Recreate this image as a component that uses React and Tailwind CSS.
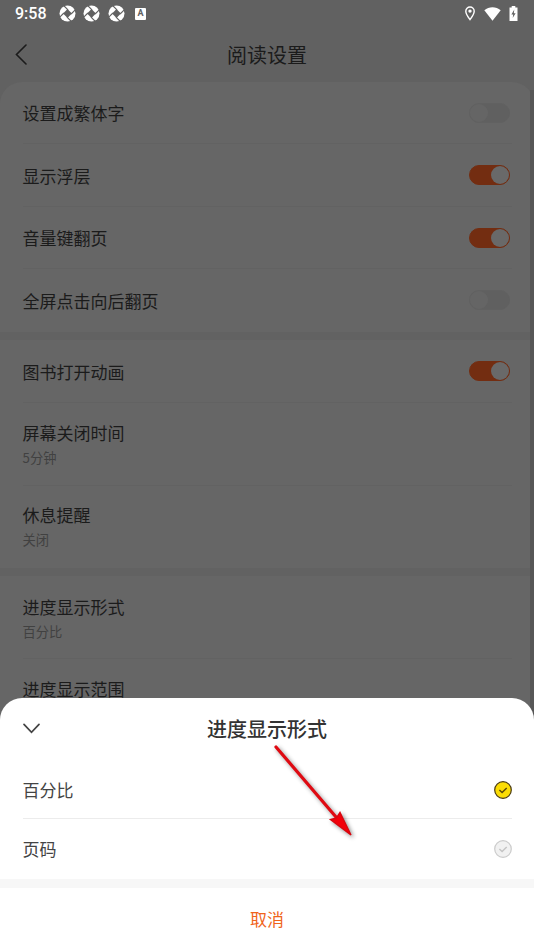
import React from 'react';

const groups = [
  [
    { title: '设置成繁体字', on: false, size: 'h-[61px] pb-px' },
    { title: '显示浮层', on: true, size: 'h-[63px]' },
    { title: '音量键翻页', on: true, size: 'h-[62px]' },
    { title: '全屏点击向后翻页', on: false, size: 'h-[63px] pb-px' },
  ],
  [
    { title: '图书打开动画', on: true, size: 'h-[63px]' },
    { title: '屏幕关闭时间', value: '5分钟', size: 'h-[83px]' },
    { title: '休息提醒', value: '关闭', size: 'h-[82px] pb-[2px]' },
  ],
  [
    { title: '进度显示形式', value: '百分比', size: 'h-[83px] pt-px' },
    { title: '进度显示范围', value: '全书', size: 'h-[82px] pb-px' },
  ],
];

function ApertureIcon() {
  return (
    <svg width="17" height="17" viewBox="0 0 17 17">
      <circle cx="8.5" cy="8.5" r="8" fill="#fff" />
      <path d="M8.5 4.1 12.9 8.5 8.5 12.9 4.1 8.5Z" fill="#616161" />
      <path d="M9 4.9 4.6.5M12.1 9 16.5 4.6M8 12.1 12.4 16.5M4.9 8 .5 12.4" stroke="#616161" strokeWidth="1.1" />
    </svg>
  );
}

function StatusBar() {
  return (
    <div className="flex h-7 items-center justify-between pl-[15px] pr-[16px] pb-px text-white">
      <div className="flex items-center">
        <span className="w-[43.5px] pt-px font-['Roboto',sans-serif] text-[16px] leading-6 font-medium">9:58</span>
        <div className="flex gap-[7.5px]">
          <ApertureIcon />
          <ApertureIcon />
          <ApertureIcon />
        </div>
        <span className="ml-[10.5px] flex h-3 w-[11px] items-center justify-center rounded-[1px] bg-white font-['Roboto',sans-serif] text-[9px] leading-none font-bold text-[#616161]">
          A
        </span>
      </div>
      <div className="flex items-center">
        <svg width="10" height="15" viewBox="0 0 10 15" fill="none" stroke="#fff" strokeWidth="1.4">
          <path d="M5 13.6C3.8 11.8.8 8.2.8 5.2a4.2 4.2 0 0 1 8.4 0c0 3-3 6.6-4.2 8.4Z" />
          <circle cx="5" cy="5.1" r="1.7" fill="#fff" stroke="none" />
        </svg>
        <svg className="ml-[9.5px]" width="17" height="14" viewBox="0 0 17 14">
          <path d="M.3 3.3C5-.7 12-.7 16.7 3.3L8.5 13.8Z" fill="#fff" />
        </svg>
        <svg className="ml-[8px]" width="9" height="15" viewBox="0 0 9 15">
          <path d="M2.7 0h3.6v1.4H8.5V15H.5V1.4h2.2Z" fill="#fff" />
          <path d="M5.3 3.6 2.4 8.5h1.8L3.7 12 6.6 7.2H4.8Z" fill="#616161" />
        </svg>
      </div>
    </div>
  );
}

function Toggle({ on }) {
  return (
    <span
      className={`mr-[2px] flex h-5 w-[41px] items-center rounded-full border ${
        on ? 'justify-end border-[#732d11] bg-[#732d11]' : 'justify-start border-[#616161] bg-[#606060]'
      }`}
    >
      <span className={`h-[18px] w-[18px] rounded-full ${on ? 'bg-[#696969]' : 'bg-[#656565]'}`} />
    </span>
  );
}

function SettingRow({ item, last }) {
  return (
    <div className={`ml-[22.5px] mr-[22px] flex items-center justify-between ${item.size} ${last ? '' : 'border-b border-[#626262]'}`}>
      <div>
        <div className="text-[17px] leading-[25px] text-[#1b1b1b]">{item.title}</div>
        {item.value && <div className="mt-[3px] text-[13.3px] leading-5 text-[#414141]">{item.value}</div>}
      </div>
      {item.on !== undefined && <Toggle on={item.on} />}
    </div>
  );
}

function CheckMark({ active }) {
  return (
    <svg width="18" height="18" viewBox="0 0 18 18" fill="none">
      <circle cx="9" cy="9" r="8.3" fill={active ? '#fbdc04' : '#f1f1f1'} stroke={active ? '#4a3a10' : '#cbcbcb'} strokeWidth="1.2" />
      <path d="M5.4 9 8.1 11.6 12.7 7" stroke={active ? '#5a4608' : '#c4c4c4'} strokeWidth="1.4" />
    </svg>
  );
}

function BottomSheet() {
  return (
    <div className="absolute inset-x-0 bottom-0 h-[252px] rounded-t-[22px] bg-white">
      <div className="relative flex h-[62px] items-center justify-center">
        <svg className="absolute left-[23px] top-[25px]" width="17" height="11" viewBox="0 0 17 11" fill="none">
          <path d="M1 1.3 8.5 9.3 16 1.3" stroke="#444" strokeWidth="1.7" strokeLinecap="round" />
        </svg>
        <h2 className="text-[20px] leading-7 font-medium text-[#333]">进度显示形式</h2>
      </div>
      <div className="ml-[22.5px] mr-[22px] flex h-[59px] items-center justify-between border-b border-[#ececec] pt-px">
        <span className="text-[17px] text-[#444]">百分比</span>
        <CheckMark active />
      </div>
      <div className="ml-[22.5px] mr-[22px] flex h-[60px] items-center justify-between pb-px">
        <span className="text-[17px] text-[#444]">页码</span>
        <CheckMark />
      </div>
      <div className="h-[9px] bg-[#f7f7f7]" />
      <button className="h-[62px] w-full text-[17px] text-[#f0641b]">取消</button>
    </div>
  );
}

function Arrow() {
  return (
    <svg
      className="absolute left-[268px] top-[738px] drop-shadow-[2px_2px_2px_rgba(0,0,0,0.45)]"
      width="96"
      height="106"
      viewBox="0 0 96 106"
    >
      <path d="M8 9 68 79" stroke="#df0a12" strokeWidth="3.2" strokeLinecap="round" />
      <path d="M83 97 62.5 81.5 68.5 80 72 74.5Z" fill="#f2000a" stroke="#d8060e" strokeWidth="1.4" />
    </svg>
  );
}

export default function App() {
  return (
    <div className="relative h-[950px] w-[534px] overflow-hidden bg-[#616161] font-['Noto_Sans_CJK_SC',sans-serif]">
      <StatusBar />
      <header className="relative flex h-[54px] items-center justify-center">
        <svg className="absolute left-[15px] top-[16px]" width="12" height="21" viewBox="0 0 12 21" fill="none">
          <path d="M11 1 1.5 10.5 11 20" stroke="#1b1b1b" strokeWidth="1.6" strokeLinecap="round" />
        </svg>
        <h1 className="text-[20px] leading-7 text-[#1b1b1b]">阅读设置</h1>
      </header>
      <main className="rounded-t-[22px] bg-[#666] pt-px">
        {groups.map((rows, i) => (
          <section key={i} className={i > 0 ? 'border-t-8 border-[#626262]' : ''}>
            {rows.map((item, j) => (
              <SettingRow key={item.title} item={item} last={j === rows.length - 1} />
            ))}
          </section>
        ))}
      </main>
      <div className="absolute right-0 top-[90px] h-[630px] w-[4px] bg-[#575757]" />
      <BottomSheet />
      <Arrow />
    </div>
  );
}
